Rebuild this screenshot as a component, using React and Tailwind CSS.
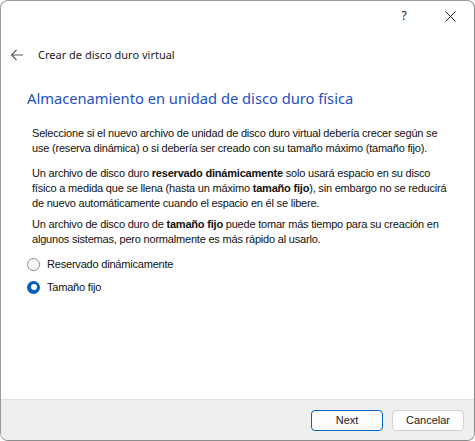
import React from 'react';

const noto = { fontFamily: '"Noto Sans", sans-serif' };
const body = { fontFamily: '"Liberation Sans", Arial, sans-serif' };

function Radio({ checked, label }) {
  return (
    <label className="flex items-center gap-[7px] h-[16px]">
      {checked ? (
        <span className="w-[13px] h-[13px] rounded-full bg-[#005fb8] flex items-center justify-center">
          <span className="w-[6px] h-[6px] rounded-full bg-white" />
        </span>
      ) : (
        <span className="w-[13px] h-[13px] rounded-full border border-[#8a8a8a] bg-[#f7f7f7]" />
      )}
      <span>{label}</span>
    </label>
  );
}

export default function App() {
  return (
    <div
      className="w-[475px] h-[441px] bg-white border border-[#9c9c9c] border-r-[#8c8c8c] border-b-[#8c8c8c] rounded-lg overflow-hidden flex flex-col text-[11px] text-[#1b1b1b]"
      style={noto}
    >
      {/* Title bar */}
      <div className="h-[30px] flex justify-end shrink-0">
        <div className="w-[46px] flex items-center justify-center text-[12px] text-[#222]">?</div>
        <div className="w-[46px] flex items-center justify-center mr-[1px]">
          <svg width="11" height="11" viewBox="0 0 11 11" stroke="#222" strokeWidth="1">
            <path d="M0.5 0.5 L10.5 10.5 M10.5 0.5 L0.5 10.5" />
          </svg>
        </div>
      </div>

      {/* Back row */}
      <div className="mt-[14px] h-[20px] flex items-center pl-[9px]">
        <svg width="14" height="12" viewBox="0 0 14 12" fill="none" stroke="#5a5a5a" strokeWidth="1.1">
          <path d="M13 6 H1.5 M6.5 1 L1.5 6 L6.5 11" />
        </svg>
        <span className="ml-[14px] text-[#1b1b1b]">Crear de disco duro virtual</span>
      </div>

      {/* Content */}
      <div className="flex-1 pl-[26px] pr-[10px] whitespace-nowrap">
        <h1 className="mt-[22px] text-[14.7px] leading-[22px] text-[#1f4fbf]">
          Almacenamiento en unidad de disco duro física
        </h1>
        <div className="tracking-[-0.2px] text-[#111]" style={body}>
          <div className="pl-[5px] leading-[15px]">
            <p className="mt-[17px]">
              Seleccione si el nuevo archivo de unidad de disco duro virtual debería crecer según se
              <br />
              use (reserva dinámica) o si debería ser creado con su tamaño máximo (tamaño fijo).
            </p>
            <p className="mt-[10px]">
              Un archivo de disco duro <b>reservado dinámicamente</b> solo usará espacio en su disco
              <br />
              físico a medida que se llena (hasta un máximo <b>tamaño fijo</b>), sin embargo no se reducirá
              <br />
              de nuevo automáticamente cuando el espacio en él se libere.
            </p>
            <p className="mt-[6px]">
              Un archivo de disco duro de <b>tamaño fijo</b> puede tomar más tiempo para su creación en
              <br />
              algunos sistemas, pero normalmente es más rápido al usarlo.
            </p>
          </div>
          <div className="mt-[9px] flex flex-col gap-[7px]">
            <Radio label="Reservado dinámicamente" />
            <Radio checked label="Tamaño fijo" />
          </div>
        </div>
      </div>

      {/* Footer */}
      <div
        className="h-[41px] shrink-0 bg-[#efefef] border-t border-[#e0e0e0] flex items-center justify-end gap-[9px] pr-[10px]"
        style={body}
      >
        <button className="w-[72px] h-[21px] rounded-[4px] border border-[#0067c0] bg-[#fdfdfd] text-[11px] text-[#1b1b1b]">
          Next
        </button>
        <button className="w-[72px] h-[21px] rounded-[4px] border border-[#d0d0d0] bg-[#fdfdfd] text-[11px] text-[#1b1b1b]">
          Cancelar
        </button>
      </div>
    </div>
  );
}
